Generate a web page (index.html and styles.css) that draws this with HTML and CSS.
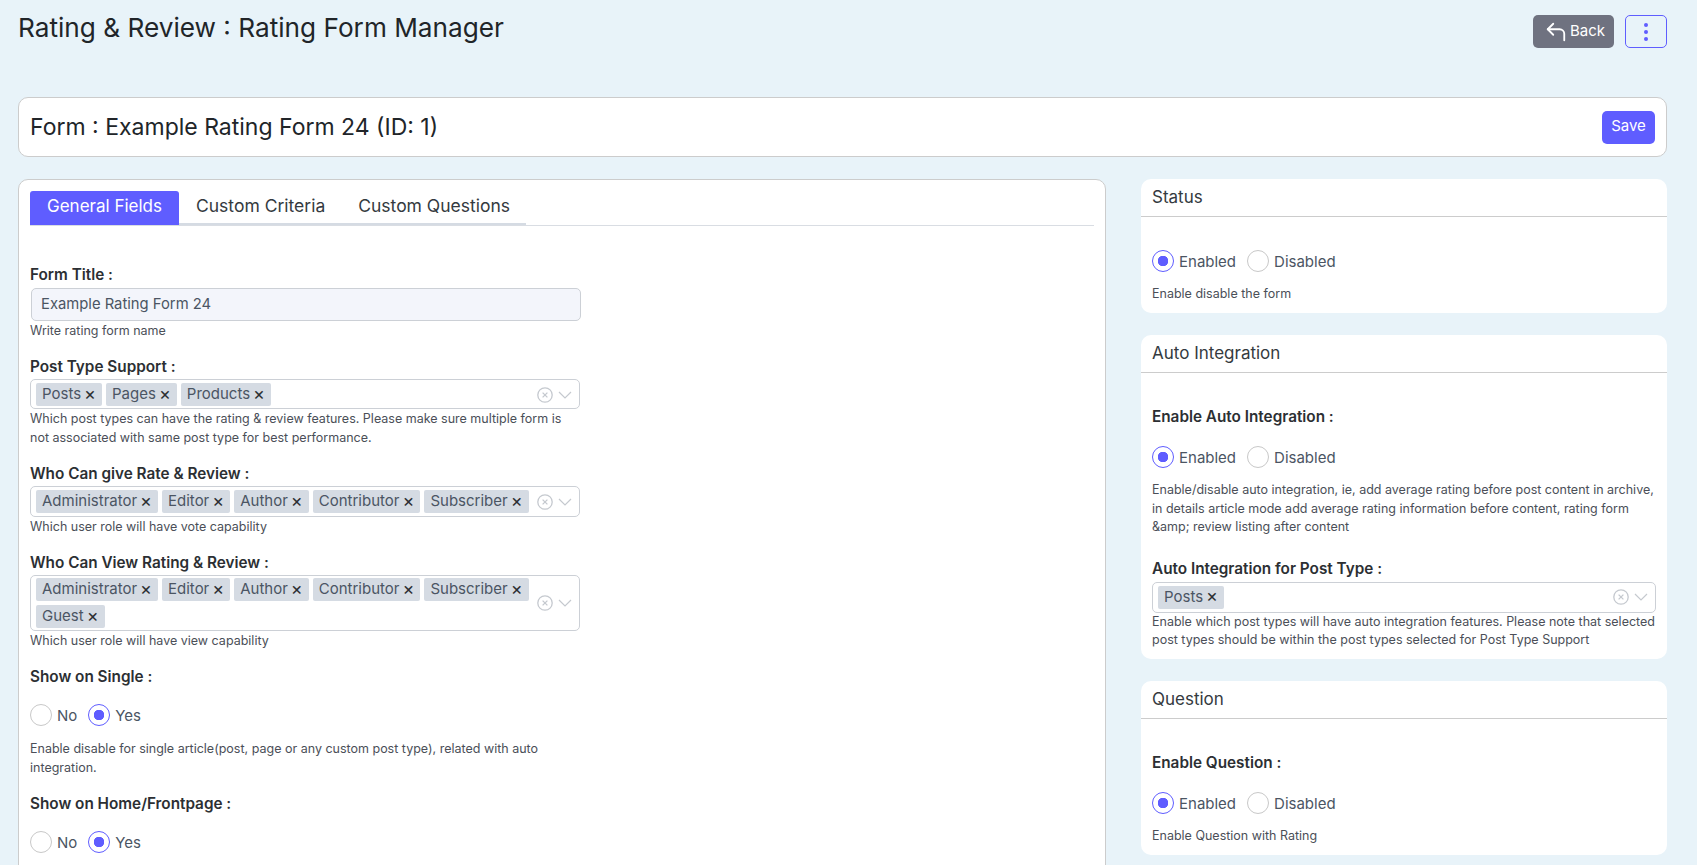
FILE: index.html
```html
<!DOCTYPE html>
<html lang="en">
  <head>
    <meta charset="UTF-8" />
    <meta name="viewport" content="width=device-width, initial-scale=1.0" />
    <title>Rating Form Manager</title>
    <link rel="stylesheet" href="styles.css">
  </head>
  <body>
    <div class="page">
      <div class="top-bar">
        <h1 class="page-title">Rating &amp; Review : Rating Form Manager</h1>
        <div class="top-actions">
          <button type="button" class="btn-back">
            <svg width="22" height="22" viewBox="0 0 24 24" fill="none" stroke="currentColor" stroke-width="2" stroke-linecap="round" stroke-linejoin="round"><polyline points="9 15 3 9 9 3"/><path d="M21 21v-7a5 5 0 0 0-5-5H3"/></svg>
            <span class="btn-text">Back</span>
          </button>
          <button type="button" class="btn-more">
            <span class="dot"></span><span class="dot"></span><span class="dot"></span>
          </button>
        </div>
      </div>

      <div class="form-bar">
        <h2 class="form-name">Form : Example Rating Form 24 (ID: 1)</h2>
        <button type="button" class="btn-save">Save</button>
      </div>

      <div class="columns">
        <div class="main-card">
          <div class="tabs">
            <a class="tab active">General Fields</a>
            <a class="tab">Custom Criteria</a>
            <a class="tab">Custom Questions</a>
          </div>

          <div class="fields">
            <div class="field">
              <label class="field-label">Form Title :</label>
              <input class="text-input" type="text" value="Example Rating Form 24" />
              <p class="help">Write rating form name</p>
            </div>

            <div class="field">
              <label class="field-label">Post Type Support :</label>
              <div class="multi h30">
                <div class="tags">
                  <span class="tag">Posts <i>×</i></span>
                  <span class="tag">Pages <i>×</i></span>
                  <span class="tag">Products <i>×</i></span>
                </div>
                <div class="indicators">
                  <svg width="16" height="16" viewBox="0 0 16 16" fill="none" stroke="currentColor" stroke-width="1.3"><circle cx="8" cy="8" r="7.2"/><path d="M5.600 5.600l4.800 4.800M10.400 5.600l-4.800 4.800"/></svg>
                  <svg width="14" height="14" viewBox="0 0 14 14" fill="none" stroke="currentColor" stroke-width="1.2"><path d="M1 4l6 6 6-6"/></svg>
                </div>
              </div>
              <p class="help">Which post types can have the rating &amp; review features. Please make sure multiple form is not associated with same post type for best performance.</p>
            </div>

            <div class="field">
              <label class="field-label">Who Can give Rate &amp; Review :</label>
              <div class="multi">
                <div class="tags">
                  <span class="tag">Administrator <i>×</i></span>
                  <span class="tag">Editor <i>×</i></span>
                  <span class="tag">Author <i>×</i></span>
                  <span class="tag">Contributor <i>×</i></span>
                  <span class="tag">Subscriber <i>×</i></span>
                </div>
                <div class="indicators">
                  <svg width="16" height="16" viewBox="0 0 16 16" fill="none" stroke="currentColor" stroke-width="1.3"><circle cx="8" cy="8" r="7.2"/><path d="M5.600 5.600l4.800 4.800M10.400 5.600l-4.800 4.800"/></svg>
                  <svg width="14" height="14" viewBox="0 0 14 14" fill="none" stroke="currentColor" stroke-width="1.2"><path d="M1 4l6 6 6-6"/></svg>
                </div>
              </div>
              <p class="help">Which user role will have vote capability</p>
            </div>

            <div class="field">
              <label class="field-label">Who Can View Rating &amp; Review :</label>
              <div class="multi">
                <div class="tags">
                  <span class="tag">Administrator <i>×</i></span>
                  <span class="tag">Editor <i>×</i></span>
                  <span class="tag">Author <i>×</i></span>
                  <span class="tag">Contributor <i>×</i></span>
                  <span class="tag">Subscriber <i>×</i></span>
                  <span class="tag">Guest <i>×</i></span>
                </div>
                <div class="indicators">
                  <svg width="16" height="16" viewBox="0 0 16 16" fill="none" stroke="currentColor" stroke-width="1.3"><circle cx="8" cy="8" r="7.2"/><path d="M5.600 5.600l4.800 4.800M10.400 5.600l-4.800 4.800"/></svg>
                  <svg width="14" height="14" viewBox="0 0 14 14" fill="none" stroke="currentColor" stroke-width="1.2"><path d="M1 4l6 6 6-6"/></svg>
                </div>
              </div>
              <p class="help">Which user role will have view capability</p>
            </div>

            <div class="field">
              <label class="field-label">Show on Single :</label>
              <div class="radios">
                <label class="radio"><input type="radio" name="single" /> No</label>
                <label class="radio"><input type="radio" name="single" checked /> Yes</label>
              </div>
              <p class="help">Enable disable for single article(post, page or any custom post type), related with auto integration.</p>
            </div>

            <div class="field">
              <label class="field-label">Show on Home/Frontpage :</label>
              <div class="radios">
                <label class="radio"><input type="radio" name="home" /> No</label>
                <label class="radio"><input type="radio" name="home" checked /> Yes</label>
              </div>
            </div>
          </div>
        </div>

        <div class="side">
          <div class="side-card">
            <div class="side-head">Status</div>
            <div class="side-body">
              <div class="radios">
                <label class="radio"><input type="radio" name="status" checked /> Enabled</label>
                <label class="radio"><input type="radio" name="status" /> Disabled</label>
              </div>
              <p class="help">Enable disable the form</p>
            </div>
          </div>

          <div class="side-card">
            <div class="side-head">Auto Integration</div>
            <div class="side-body">
              <div class="field">
                <label class="field-label">Enable Auto Integration :</label>
                <div class="radios">
                  <label class="radio"><input type="radio" name="auto" checked /> Enabled</label>
                  <label class="radio"><input type="radio" name="auto" /> Disabled</label>
                </div>
                <p class="help">Enable/disable auto integration, ie, add average rating before post content in archive, in details article mode add average rating information before content, rating form &amp;amp; review listing after content</p>
              </div>
              <div class="field field-second">
                <label class="field-label">Auto Integration for Post Type :</label>
                <div class="multi">
                  <div class="tags">
                    <span class="tag">Posts <i>×</i></span>
                  </div>
                  <div class="indicators">
                    <svg width="16" height="16" viewBox="0 0 16 16" fill="none" stroke="currentColor" stroke-width="1.3"><circle cx="8" cy="8" r="7.2"/><path d="M5.600 5.600l4.800 4.800M10.400 5.600l-4.800 4.800"/></svg>
                    <svg width="14" height="14" viewBox="0 0 14 14" fill="none" stroke="currentColor" stroke-width="1.2"><path d="M1 4l6 6 6-6"/></svg>
                  </div>
                </div>
                <p class="help">Enable which post types will have auto integration features. Please note that selected post types should be within the post types selected for Post Type Support</p>
              </div>
            </div>
          </div>

          <div class="side-card">
            <div class="side-head">Question</div>
            <div class="side-body">
              <div class="field">
                <label class="field-label">Enable Question :</label>
                <div class="radios">
                  <label class="radio"><input type="radio" name="question" checked /> Enabled</label>
                  <label class="radio"><input type="radio" name="question" /> Disabled</label>
                </div>
                <p class="help">Enable Question with Rating</p>
              </div>
            </div>
          </div>
        </div>
      </div>
    </div>
  </body>
</html>
```

FILE: styles.css
```css
html,
body {
  margin: 0;
  height: 865px;
  overflow: hidden;
}
body {
  background-color: #e8f3f9;
  color: #212529;
  font-family: "Inter", "Liberation Sans", sans-serif;
}
.page {
  padding: 0 30px 0 18px;
}
.top-bar {
  display: flex;
  justify-content: space-between;
  height: 82px;
  padding-top: 15px;
}
.page-title {
  margin: 0;
  font-size: 26.2px;
  font-weight: 400;
  line-height: 26px;
}
.top-actions {
  display: flex;
  gap: 11px;
  height: 33px;
}
button {
  font-family: inherit;
  cursor: pointer;
}
.btn-back {
  display: flex;
  align-items: center;
  gap: 3px;
  width: 81px;
  padding: 0 0 0 12px;
  border: none;
  border-radius: 5px;
  background-color: #6f7280;
  color: #fff;
  font-size: 15px;
}
.btn-text {
  margin-bottom: 2px;
}
.btn-more {
  display: flex;
  flex-direction: column;
  align-items: center;
  justify-content: center;
  gap: 3px;
  width: 42px;
  padding: 0;
  border: 1px solid #5f5dff;
  border-radius: 5px;
  background: transparent;
}
.dot {
  width: 4px;
  height: 4px;
  border-radius: 50%;
  background-color: #5f5dff;
}
.form-bar {
  display: flex;
  align-items: center;
  justify-content: space-between;
  height: 60px;
  padding: 0 11px;
  box-sizing: border-box;
  border: 1px solid #cccccc;
  border-radius: 10px;
  background-color: #fff;
}
.form-name {
  margin: 0;
  font-size: 23px;
  font-weight: 400;
}
.btn-save {
  width: 53px;
  height: 33px;
  padding: 0 0 3px;
  border: none;
  border-radius: 5px;
  background-color: #5f5dff;
  color: #fff;
  font-size: 15px;
}
.columns {
  display: grid;
  grid-template-columns: 1088px 526px;
  gap: 35px;
  margin-top: 22px;
  align-items: start;
}
.main-card {
  padding: 11px 11px 60px;
  border: 1px solid #cccccc;
  border-radius: 10px;
  background-color: #fff;
}
.tabs {
  display: flex;
  height: 34px;
  border-bottom: 1px solid #d9dde3;
}
.tab {
  display: flex;
  align-items: center;
  height: 34px;
  padding: 0 16px 4px 17px;
  box-sizing: border-box;
  border-bottom: 2px solid #d5dbe3;
  font-size: 17.5px;
  color: #343a40;
}
.tab.active {
  border-bottom: none;
  border-radius: 3px 3px 0 0;
  background-color: #5f5dff;
  color: #fff;
  font-size: 17px;
  padding: 0 17px 4px;
}
.fields {
  width: 550px;
  padding-top: 39px;
}
.field {
  margin-bottom: 17px;
}
.field-label {
  display: block;
  margin-bottom: 2px;
  font-size: 15.3px;
  font-weight: 600;
  line-height: 20px;
  color: #2c2f33;
}
.text-input {
  display: block;
  width: 100%;
  height: 33px;
  margin: 3px 0 0 1px;
  padding: 0 9px 2px;
  box-sizing: border-box;
  border: 1px solid #ccd0d6;
  border-radius: 5px;
  background-color: #f3f5fb;
  font-family: inherit;
  font-size: 14.8px;
  color: #4b5563;
}
.help {
  margin: 0;
  font-size: 12.5px;
  line-height: 19px;
  color: #4b4f58;
}
.multi {
  display: flex;
  align-items: center;
  min-height: 31px;
  box-sizing: border-box;
  padding: 2px 0 2px 5px;
  border: 1px solid #ccd0d6;
  border-radius: 5px;
}
.multi.h30 {
  min-height: 30px;
  padding-top: 3px;
}
.tags {
  display: flex;
  flex-wrap: wrap;
  gap: 4px;
  flex: 1;
}
.tag {
  display: flex;
  align-items: center;
  gap: 3px;
  height: 23px;
  padding: 0 6px 2px;
  box-sizing: border-box;
  border-radius: 2px;
  background-color: #d5dbe3;
  font-size: 15px;
  color: #4b5563;
}
.tag i {
  font-style: normal;
  font-size: 18px;
  line-height: 18px;
  color: #2c2f33;
}
.indicators {
  display: flex;
  align-items: center;
  gap: 5px;
  width: 42px;
  color: #c5c9cf;
}
.radios {
  display: flex;
  gap: 11px;
  margin-top: 17px;
  height: 22px;
}
.radio {
  display: flex;
  align-items: center;
  gap: 5px;
  font-size: 15px;
  color: #4b5563;
}
.radio input {
  appearance: none;
  width: 22px;
  height: 22px;
  margin: 0;
  border: 1px solid #c8c8c8;
  border-radius: 50%;
  background-color: #fff;
}
.radio input:checked {
  border-color: #5f5dff;
  background-image: radial-gradient(circle, #5f5dff 0, #5f5dff 5px, transparent 5.5px);
}
.radios + .help {
  margin-top: 13px;
}
.side {
  display: flex;
  flex-direction: column;
  gap: 22px;
}
.side-card {
  border-radius: 10px;
  background-color: #fff;
}
.side-head {
  height: 38px;
  padding: 0 11px;
  box-sizing: border-box;
  border-bottom: 1px solid #cccccc;
  font-size: 17px;
  line-height: 36px;
  color: #343a40;
}
.side-body {
  padding: 34px 11px 9.5px;
}
.side-body .radios {
  margin-top: 19px;
}
.side-body > .radios {
  margin-top: -1px;
}
.side-body .field {
  margin-bottom: 0;
}
.side-body .help {
  line-height: 18.5px;
}
.field-second {
  margin-top: 22px;
}
.field-second .multi {
  margin-top: 3px;
}
```
